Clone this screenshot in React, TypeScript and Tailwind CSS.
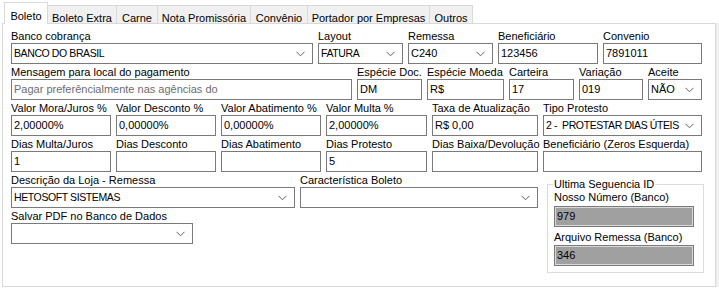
import React from "react";

const FONT = { fontFamily: '"Liberation Sans", Arial, sans-serif' };

interface FieldProps {
  label: string;
  w: string;
  value?: string;
  select?: boolean;
  muted?: boolean;
  tight?: boolean;
}

const Chevron: React.FC = () => (
  <svg width="9" height="6" viewBox="0 0 9 6" className="shrink-0">
    <polyline points="0.5,0.8 4.5,4.8 8.5,0.8" fill="none" stroke="#5f5f5f" strokeWidth="1" />
  </svg>
);

const Field: React.FC<FieldProps> = ({ label, w, value = "", select, muted, tight }) => (
  <div className={`flex flex-col shrink-0 ${w}`}>
    <div className="h-[13px] leading-[13px] text-[11px] text-black whitespace-nowrap">{label}</div>
    <div className="h-[21px] border border-[#7a7a7a] bg-white flex items-center pl-[2px] pr-[7px]">
      <span
        className={`flex-1 whitespace-pre overflow-hidden ${
          tight ? "text-[10.5px] tracking-[-0.4px]" : "text-[11px]"
        } ${muted ? "text-[#6d6d6d]" : "text-black"}`}
      >
        {value}
      </span>
      {select && <Chevron />}
    </div>
  </div>
);

const tabs = [
  { name: "Boleto Extra", w: "w-[69px]" },
  { name: "Carne", w: "w-[41px]" },
  { name: "Nota Promissória", w: "w-[93px]" },
  { name: "Convênio", w: "w-[57px]" },
  { name: "Portador por Empresas", w: "w-[122px]" },
  { name: "Outros", w: "w-[43px]" },
];

const App: React.FC = () => {
  return (
    <div className="w-[719px] h-[292px] bg-white overflow-hidden" style={FONT}>
      {/* Tab strip */}
      <div className="flex items-end pl-[4px] pt-[2px] h-[24px] relative z-10 -mb-px">
        <div className="w-[44px] h-[22px] bg-white border-t border-l border-r border-[#d9d9d9] text-[11px] text-black flex justify-center pt-[5px]">
          Boleto
        </div>
        {tabs.map((t) => (
          <div
            key={t.name}
            className={`${t.w} h-[19px] bg-[#f0f0f0] border-t border-r border-b border-[#d9d9d9] text-[11px] text-black flex justify-center pt-[4px] whitespace-nowrap`}
          >
            {t.name}
          </div>
        ))}
      </div>

      <div className="flex">
        {/* Panel */}
        <div className="ml-[2px] w-[714px] h-[264px] border border-[#d9d9d9] bg-white pl-[8px] pt-[6px] flex flex-col gap-[2px]">
          <div className="flex gap-[5px]">
            <Field label="Banco cobrança" w="w-[302px]" value="BANCO DO BRASIL" select tight />
            <Field label="Layout" w="w-[85px]" value="FATURA" select tight />
            <Field label="Remessa" w="w-[85px]" value="C240" select />
            <Field label="Beneficiário" w="w-[100px]" value="123456" />
            <Field label="Convenio" w="w-[99px]" value="7891011" />
          </div>
          <div className="flex gap-[5px]">
            <Field
              label="Mensagem para local do pagamento"
              w="w-[341px]"
              value="Pagar preferêncialmente nas agências do"
              muted
            />
            <Field label="Espécie Doc." w="w-[65px]" value="DM" />
            <Field label="Espécie Moeda" w="w-[77px]" value="R$" />
            <Field label="Carteira" w="w-[65px]" value="17" />
            <Field label="Variação" w="w-[64px]" value="019" />
            <Field label="Aceite" w="w-[54px]" value="NÃO" select />
          </div>
          <div className="flex gap-[5px]">
            <Field label="Valor Mora/Juros %" w="w-[100px]" value="2,00000%" />
            <Field label="Valor Desconto %" w="w-[100px]" value="0,00000%" />
            <Field label="Valor Abatimento %" w="w-[100px]" value="0,00000%" />
            <Field label="Valor Multa %" w="w-[101px]" value="2,00000%" />
            <Field label="Taxa de Atualização" w="w-[106px]" value="R$ 0,00" />
            <Field label="Tipo Protesto" w="w-[159px]" value="2 -  PROTESTAR DIAS ÚTEIS" select tight />
          </div>
          <div className="flex gap-[5px]">
            <Field label="Dias Multa/Juros" w="w-[100px]" value="1" />
            <Field label="Dias Desconto" w="w-[100px]" />
            <Field label="Dias Abatimento" w="w-[100px]" />
            <Field label="Dias Protesto" w="w-[101px]" value="5" />
            <Field label="Dias Baixa/Devolução" w="w-[106px]" />
            <Field label="Beneficiário (Zeros Esquerda)" w="w-[159px]" />
          </div>

          <div className="flex">
            <div className="w-[527px] flex flex-col gap-[2px]">
              <div className="flex gap-[5px]">
                <Field label="Descrição da Loja - Remessa" w="w-[284px]" value="HETOSOFT SISTEMAS" select tight />
                <Field label="Característica Boleto" w="w-[238px]" select />
              </div>
              <div className="flex">
                <Field label="Salvar PDF no Banco de Dados" w="w-[182px]" select />
              </div>
            </div>

            {/* Group box */}
            <div className="ml-[9px] mt-[10px] w-[157px] h-[89px] border border-[#dcdcdc] relative pl-[6px] pr-[9px] pt-[6px]">
              <div className="absolute -top-[7px] left-[5px] bg-white px-[1px] text-[11px] leading-[13px] text-black whitespace-nowrap">
                Ultima Seguencia ID
              </div>
              <div className="h-[13px] leading-[13px] text-[11px] text-black whitespace-nowrap">
                Nosso Número (Banco)
              </div>
              <div className="mt-[2px] h-[21px] border border-[#7a7a7a] bg-[#a0a0a0] shadow-[inset_0_0_0_1px_#d8d8d8] flex items-center pl-[2px] text-[11px] text-black">
                979
              </div>
              <div className="mt-[4px] h-[13px] leading-[13px] text-[11px] text-black whitespace-nowrap">
                Arquivo Remessa (Banco)
              </div>
              <div className="mt-[1px] h-[21px] border border-[#7a7a7a] bg-[#a0a0a0] shadow-[inset_0_0_0_1px_#d8d8d8] flex items-center pl-[2px] text-[11px] text-black">
                346
              </div>
            </div>
          </div>
        </div>
        <div className="w-[3px] h-[264px] bg-[#f0f0f0]" />
      </div>
    </div>
  );
};

export default App;
